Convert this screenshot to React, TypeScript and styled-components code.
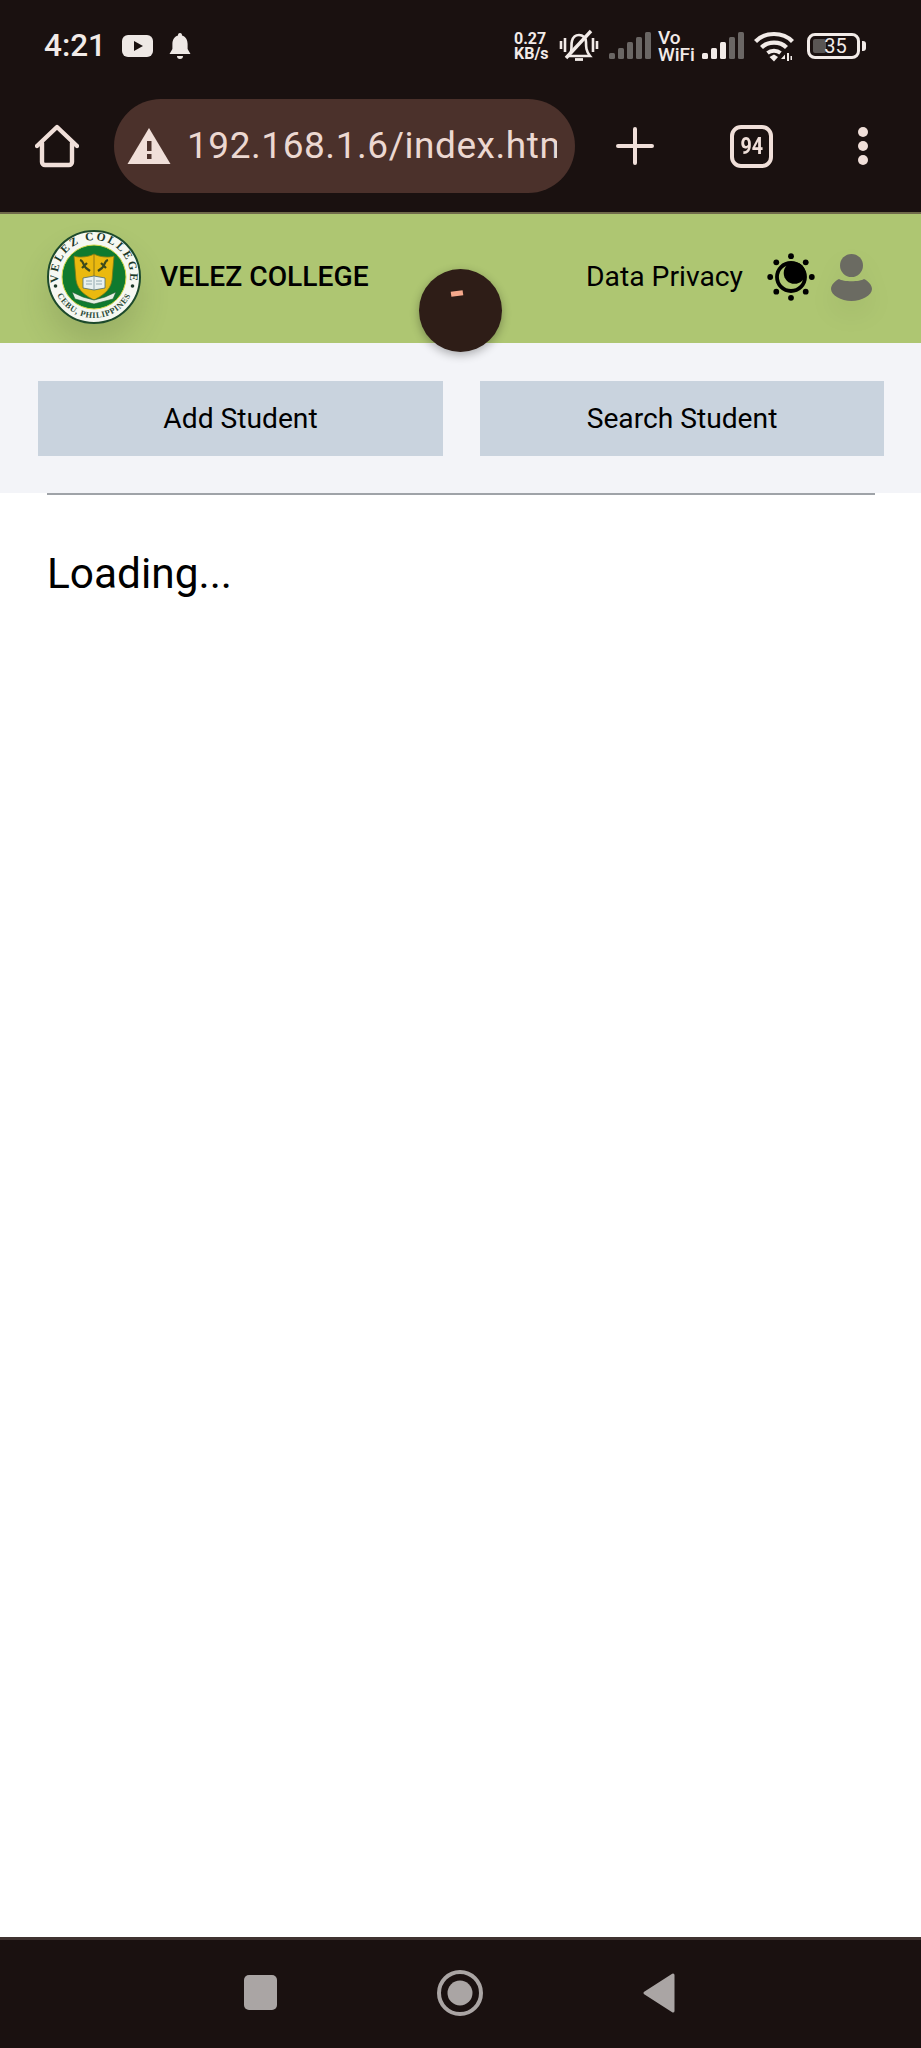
import React from "react";
import styled, { createGlobalStyle } from "styled-components";

const Global = createGlobalStyle`
  html, body { margin: 0; padding: 0; background: #fff; }
  * { box-sizing: border-box; }
  body { font-family: Roboto, "Liberation Sans", sans-serif; color: #000; }
`;

const Screen = styled.div`
  width: 921px;
  height: 2048px;
  display: flex;
  flex-direction: column;
  position: relative;
  overflow: hidden;
  background: #fff;
`;

const Chrome = styled.header`
  height: 214px;
  flex: none;
  background: #1a1110;
  border-bottom: 2px solid #6f6a4a;
  display: flex;
  flex-direction: column;
`;

const StatusBar = styled.div`
  height: 92px;
  flex: none;
  padding: 27px 0 0 44px;
  display: flex;
  align-items: flex-start;
  color: #f2ebe8;
`;

const Clock = styled.span`
  font-size: 31.5px;
  font-weight: 500;
  line-height: 38px;
  width: 78px;
`;

const LeftIcons = styled.div`
  display: flex;
  align-items: center;
  gap: 16px;
  height: 38px;
`;

const RightIcons = styled.div`
  margin-left: auto;
  margin-right: 61px;
  display: flex;
  align-items: center;
  height: 38px;
  color: #f2ebe8;
`;

const NetSpeed = styled.div`
  width: 45px;
  font-size: 16px;
  font-weight: 700;
  line-height: 15px;
  display: flex;
  flex-direction: column;
  align-items: flex-start;
  white-space: nowrap;
`;

const VoWifi = styled.div`
  width: 37px;
  margin: 0 7px;
  font-weight: 500;
  white-space: nowrap;
  display: flex;
  flex-direction: column;
`;

const VoLine = styled.span`
  font-size: 19px;
  line-height: 17px;
`;

const SpacerSlot = styled.div`
  width: 10px;
  flex: none;
`;

const Battery = styled.div`
  position: relative;
  width: 53px;
  height: 26px;
  margin-left: 13px;
  border: 3px solid #f2ebe8;
  border-radius: 8px;
  font-size: 20px;
  line-height: 20px;
  display: flex;
  align-items: center;
  justify-content: center;
  padding-left: 4px;
  &::before {
    content: "";
    position: absolute;
    left: 3px;
    top: 3px;
    bottom: 3px;
    width: 13px;
    background: #5a5654;
    border-radius: 2px;
  }
  &::after {
    content: "";
    position: absolute;
    right: -9px;
    top: 5px;
    width: 4px;
    height: 10px;
    border-radius: 0 3px 3px 0;
    background: #f2ebe8;
  }
`;

const BatteryValue = styled.span`
  position: relative;
`;

const Toolbar = styled.div`
  flex: 1;
  display: flex;
  align-items: flex-start;
  padding: 7px 0 0 35px;
  color: #f0dfd9;
`;

const HomeIcon = styled.svg`
  margin-top: 25px;
  flex: none;
`;

const UrlPill = styled.div`
  width: 461px;
  height: 94px;
  margin-left: 35px;
  border-radius: 47px;
  background: #4b312b;
  display: flex;
  align-items: center;
  padding-left: 13px;
  overflow: hidden;
  flex: none;
`;

const UrlIcon = styled.svg`
  flex: none;
`;

const UrlText = styled.span`
  width: 370px;
  margin-left: 16px;
  overflow: hidden;
  white-space: nowrap;
  flex: none;
  font-size: 37px;
  line-height: 44px;
  letter-spacing: 0.55px;
  color: #ecd8d1;
`;

const ToolSlot = styled.div<{ $left: number }>`
  margin-left: ${(p) => p.$left}px;
  height: 94px;
  display: flex;
  align-items: center;
  flex: none;
`;

const TabCount = styled.div`
  width: 43px;
  height: 43px;
  border: 4px solid #f0dfd9;
  border-radius: 11px;
  display: flex;
  align-items: center;
  justify-content: center;
`;

const TabDigits = styled.span`
  display: inline-block;
  font-size: 24px;
  font-weight: 700;
  transform: scaleX(0.82);
`;

const Dots = styled.div`
  display: flex;
  flex-direction: column;
  gap: 4px;
`;

const Dot = styled.span`
  width: 10px;
  height: 10px;
  border-radius: 50%;
  background: #f0dfd9;
`;

const AppHeader = styled.div`
  height: 129px;
  flex: none;
  background: #aec672;
  display: flex;
  align-items: center;
  padding: 0 49px 3px 47px;
`;

const LogoWrap = styled.div`
  width: 94px;
  height: 94px;
  border-radius: 50%;
  box-shadow: 0 20px 30px rgba(60, 70, 40, 0.17);
  flex: none;
`;

const Brand = styled.span`
  margin: 0 0 2px 19px;
  font-size: 28.2px;
  font-weight: 500;
  white-space: nowrap;
`;

const HeaderLinks = styled.nav`
  margin-left: auto;
  display: flex;
  align-items: center;
`;

const PrivacyLink = styled.span`
  margin-bottom: 2px;
  font-size: 28.3px;
  white-space: nowrap;
`;

const ThemeIcon = styled.svg`
  margin-left: 24px;
  width: 48px;
  height: 48px;
  display: block;
`;

const UserIcon = styled.svg`
  margin-left: 16px;
  width: 41px;
  height: 48px;
  display: block;
  filter: drop-shadow(0 12px 12px rgba(0, 0, 0, 0.05));
`;

const FloatingBall = styled.div`
  position: absolute;
  left: 419px;
  top: 269px;
  width: 83px;
  height: 83px;
  border-radius: 50%;
  background: #2e1d17;
  box-shadow: 0 3px 10px rgba(0, 0, 0, 0.3);
  &::after {
    content: "";
    position: absolute;
    left: 32px;
    top: 22px;
    width: 12px;
    height: 5px;
    background: #f6a98c;
    transform: rotate(-8deg);
  }
`;

const ActionBand = styled.div`
  height: 150px;
  flex: none;
  background: #f3f4f8;
  padding: 38px 37px 0 38px;
  display: grid;
  grid-template-columns: 405px 404px;
  column-gap: 37px;
  align-content: start;
`;

const ActionButton = styled.button`
  height: 75px;
  border: none;
  background: #c9d3de;
  color: #000;
  font-family: inherit;
  font-size: 28.2px;
  padding: 0 0 1px;
`;

const Content = styled.main`
  flex: 1;
  padding: 0 46px 0 47px;
`;

const Rule = styled.hr`
  margin: 0;
  border: none;
  height: 2px;
  background: #9fa3a8;
`;

const Loading = styled.p`
  margin: 54px 0 0;
  font-size: 42.4px;
  line-height: 50px;
`;

const NavBar = styled.footer`
  height: 111px;
  flex: none;
  background: #1a1110;
  border-top: 3px solid #3f3230;
  display: grid;
  grid-template-columns: 33px 46px 32px;
  column-gap: 160px;
  justify-content: center;
  align-items: center;
  padding: 0 3px 3px 0;
  color: #aaa5a4;
`;

const NavSquare = styled.div`
  width: 33px;
  height: 35px;
  background: #aaa5a4;
  border-radius: 5px;
`;

const Logo = () => (
  <svg width="94" height="94" viewBox="0 0 94 94" aria-label="Velez College seal" style={{ display: "block" }}>
    <defs>
      <path id="arcTop" d="M 11.5 52 A 36 36 0 1 1 82.5 52" />
      <path id="arcBottom" d="M 7.5 58 A 41 41 0 0 0 86.5 58" />
    </defs>
    <circle cx="47" cy="47" r="46" fill="#f6f8f2" stroke="#1d4a2c" strokeWidth="2" />
    <text fontFamily="Liberation Serif, serif" fontWeight="700" fontSize="11.5" fill="#1d3a2a" letterSpacing="2.1">
      <textPath href="#arcTop" startOffset="50%" textAnchor="middle">VELEZ COLLEGE</textPath>
    </text>
    <text fontFamily="Liberation Serif, serif" fontWeight="700" fontSize="8.4" fill="#2b4a38" letterSpacing="0.6">
      <textPath href="#arcBottom" startOffset="50%" textAnchor="middle">CEBU, PHILIPPINES</textPath>
    </text>
    <circle cx="8.5" cy="56" r="1.8" fill="#1d3a2a" />
    <circle cx="85.5" cy="56" r="1.8" fill="#1d3a2a" />
    <circle cx="47" cy="47" r="32" fill="#0f7a2e" />
    <circle cx="47" cy="47" r="32" fill="none" stroke="#d8d84a" strokeWidth="1" />
    <path d="M27 26 C32 28 42 27 47 24 C52 27 62 28 67 26 L65 50 C63 62 54 66 47 70 C40 66 31 62 29 50 Z" fill="#eab90f" stroke="#7f7a14" strokeWidth="0.8" />
    <path d="M47 24 V46" stroke="#7f6a14" strokeWidth="0.8" />
    <path d="M33 30 C37 31 36 36 39 38 L43 41 M35 38 L40 33" stroke="#3c4a1c" strokeWidth="2.2" fill="none" />
    <path d="M61 30 C57 31 58 36 55 38 L51 41 M59 38 L54 33" stroke="#3c4a1c" strokeWidth="2.2" fill="none" />
    <path d="M36 48 L47 46 L58 48 V58 L47 60 L36 58 Z" fill="#e8f0ee" stroke="#4a6a70" strokeWidth="0.8" />
    <path d="M47 46 V60 M39 51 H45 M49 51 H55 M39 54 H45 M49 54 H55" stroke="#7d97a0" strokeWidth="0.8" />
    <path d="M25 62 L36 67 L47 70 L58 67 L69 62 L66 69 L47 74 L28 69 Z" fill="#e6efe3" stroke="#1d5a30" strokeWidth="0.6" />
  </svg>
);

const Signal = ({ bars }: { bars: number[] }) => (
  <svg width="42" height="28" viewBox="0 0 42 28" style={{ display: "block" }}>
    {[0, 1, 2, 3, 4].map((i) => {
      const h = [6, 11, 17, 22, 27][i];
      return (
        <rect key={i} x={i * 9} y={27 - h} width="6" height={h} rx="1.5" fill={bars.includes(i) ? "#f2ebe8" : "#6a6664"} />
      );
    })}
  </svg>
);

export default function App() {
  return (
    <Screen>
      <Global />
      <Chrome>
        <StatusBar>
          <Clock>4:21</Clock>
          <LeftIcons>
            <svg width="31" height="22" viewBox="0 0 31 22">
              <rect width="31" height="22" rx="6" fill="#eee8e5" />
              <path d="M12 6 L21 11 L12 16 Z" fill="#1a1110" />
            </svg>
            <svg width="22" height="27" viewBox="0 0 22 27">
              <path d="M11 0 C12.6 0 13 1.2 13 2.4 C17 3.6 18.6 7 18.6 11 V16 L21.5 21 H0.5 L3.4 16 V11 C3.4 7 5 3.6 9 2.4 C9 1.2 9.4 0 11 0 Z" fill="#eee8e5" />
              <path d="M8 23 H14 A3 3 0 0 1 8 23 Z" fill="#eee8e5" />
            </svg>
          </LeftIcons>
          <RightIcons>
            <NetSpeed>
              <span>0.27</span>
              <span>KB/s</span>
            </NetSpeed>
            <svg width="40" height="34" viewBox="0 0 40 34" fill="none" stroke="#f2ebe8" style={{ display: "block" }}>
              <path d="M2 12 V20 M6 9 V23 M34 9 V23 M38 12 V20" strokeWidth="2.6" />
              <path d="M9 27 L12 23 C13 19 12 15 13 12 C14 8 17 6 20 6 C24 6 27 9 27 13 C27 18 27 22 31 27 Z" strokeWidth="2.6" />
              <path d="M16 30.5 H24" strokeWidth="2.8" />
              <path d="M7 29 L32 2" strokeWidth="3.4" />
            </svg>
            <SpacerSlot />
            <Signal bars={[]} />
            <VoWifi>
              <VoLine>Vo</VoLine>
              <VoLine>WiFi</VoLine>
            </VoWifi>
            <Signal bars={[0, 1, 2]} />
            <SpacerSlot />
            <svg width="40" height="31" viewBox="0 0 40 31" fill="none" stroke="#f2ebe8" style={{ display: "block" }}>
              <path d="M1.5 10.5 C11 0.5 29 0.5 38.5 10.5" strokeWidth="4.2" />
              <path d="M7.5 16.5 C14 10 26 10 32.5 16.5" strokeWidth="4.2" />
              <path d="M13.5 22 C17 19 23 19 26.5 22" strokeWidth="3.8" />
              <path d="M15.5 26 L20 23.5 L24 26 L20 30.5 Z" fill="#f2ebe8" stroke="none" />
              <path d="M27 28 L31 23.5 V28 Z M33 22 V30 H35 V22 Z M36.5 25 V29 H38 V25 Z" fill="#f2ebe8" stroke="none" />
            </svg>
            <Battery>
              <BatteryValue>35</BatteryValue>
            </Battery>
          </RightIcons>
        </StatusBar>
        <Toolbar>
          <HomeIcon width="44" height="44" viewBox="0 0 44 44" fill="none" stroke="#f0dfd9" strokeWidth="4.4" strokeLinejoin="round" strokeLinecap="round">
            <path d="M2 22 L22 3 L42 22" />
            <path d="M7 19 V38 A3 3 0 0 0 10 41 H34 A3 3 0 0 0 37 38 V19" />
          </HomeIcon>
          <UrlPill>
            <UrlIcon width="44" height="38" viewBox="0 0 44 38">
              <path d="M22 1 L43.5 37 H0.5 Z" fill="#f0dfd9" />
              <rect x="20" y="14" width="4.5" height="10" fill="#4b312b" />
              <rect x="20" y="27" width="4.5" height="5" fill="#4b312b" />
            </UrlIcon>
            <UrlText>192.168.1.6/index.html</UrlText>
          </UrlPill>
          <ToolSlot $left={41}>
            <svg width="38" height="38" viewBox="0 0 38 38" stroke="#f0dfd9" strokeWidth="4" strokeLinecap="round">
              <path d="M2 19 H36 M19 2 V36" />
            </svg>
          </ToolSlot>
          <ToolSlot $left={76}>
            <TabCount>
              <TabDigits>94</TabDigits>
            </TabCount>
          </ToolSlot>
          <ToolSlot $left={85}>
            <Dots>
              <Dot />
              <Dot />
              <Dot />
            </Dots>
          </ToolSlot>
        </Toolbar>
      </Chrome>

      <AppHeader>
        <LogoWrap>
          <Logo />
        </LogoWrap>
        <Brand>VELEZ COLLEGE</Brand>
        <HeaderLinks>
          <PrivacyLink>Data Privacy</PrivacyLink>
          <ThemeIcon viewBox="0 0 48 48">
            <circle cx="24" cy="24" r="14" fill="none" stroke="#000" strokeWidth="3.8" />
            <circle cx="27.5" cy="20" r="10.8" fill="#000" />
            {[0, 45, 90, 135, 180, 225, 270, 315].map((a) => (
              <circle
                key={a}
                cx={24 + 20.8 * Math.cos((a * Math.PI) / 180)}
                cy={24 + 20.8 * Math.sin((a * Math.PI) / 180)}
                r="2.9"
                fill="#000"
              />
            ))}
          </ThemeIcon>
          <UserIcon viewBox="0 0 41 48">
            <circle cx="20.5" cy="12.5" r="11.5" fill="#6b6b62" />
            <path d="M8 26 C12 29 29 29 33 26 C37 28 41 32 41 36 C41 42 31 48 20.5 48 C10 48 0 42 0 36 C0 32 4 28 8 26 Z" fill="#6b6b62" />
          </UserIcon>
        </HeaderLinks>
      </AppHeader>

      <ActionBand>
        <ActionButton>Add Student</ActionButton>
        <ActionButton>Search Student</ActionButton>
      </ActionBand>

      <Content>
        <Rule />
        <Loading>Loading...</Loading>
      </Content>

      <NavBar>
        <NavSquare />
        <svg width="46" height="46" viewBox="0 0 46 46" style={{ display: "block" }}>
          <circle cx="23" cy="23" r="21" fill="none" stroke="#aaa5a4" strokeWidth="4" />
          <circle cx="23" cy="23" r="12.5" fill="#aaa5a4" />
        </svg>
        <svg width="32" height="40" viewBox="0 0 32 40" style={{ display: "block" }}>
          <path d="M30 2 V38 L2 20 Z" fill="#aaa5a4" stroke="#aaa5a4" strokeWidth="3" strokeLinejoin="round" />
        </svg>
      </NavBar>

      <FloatingBall />
    </Screen>
  );
}
